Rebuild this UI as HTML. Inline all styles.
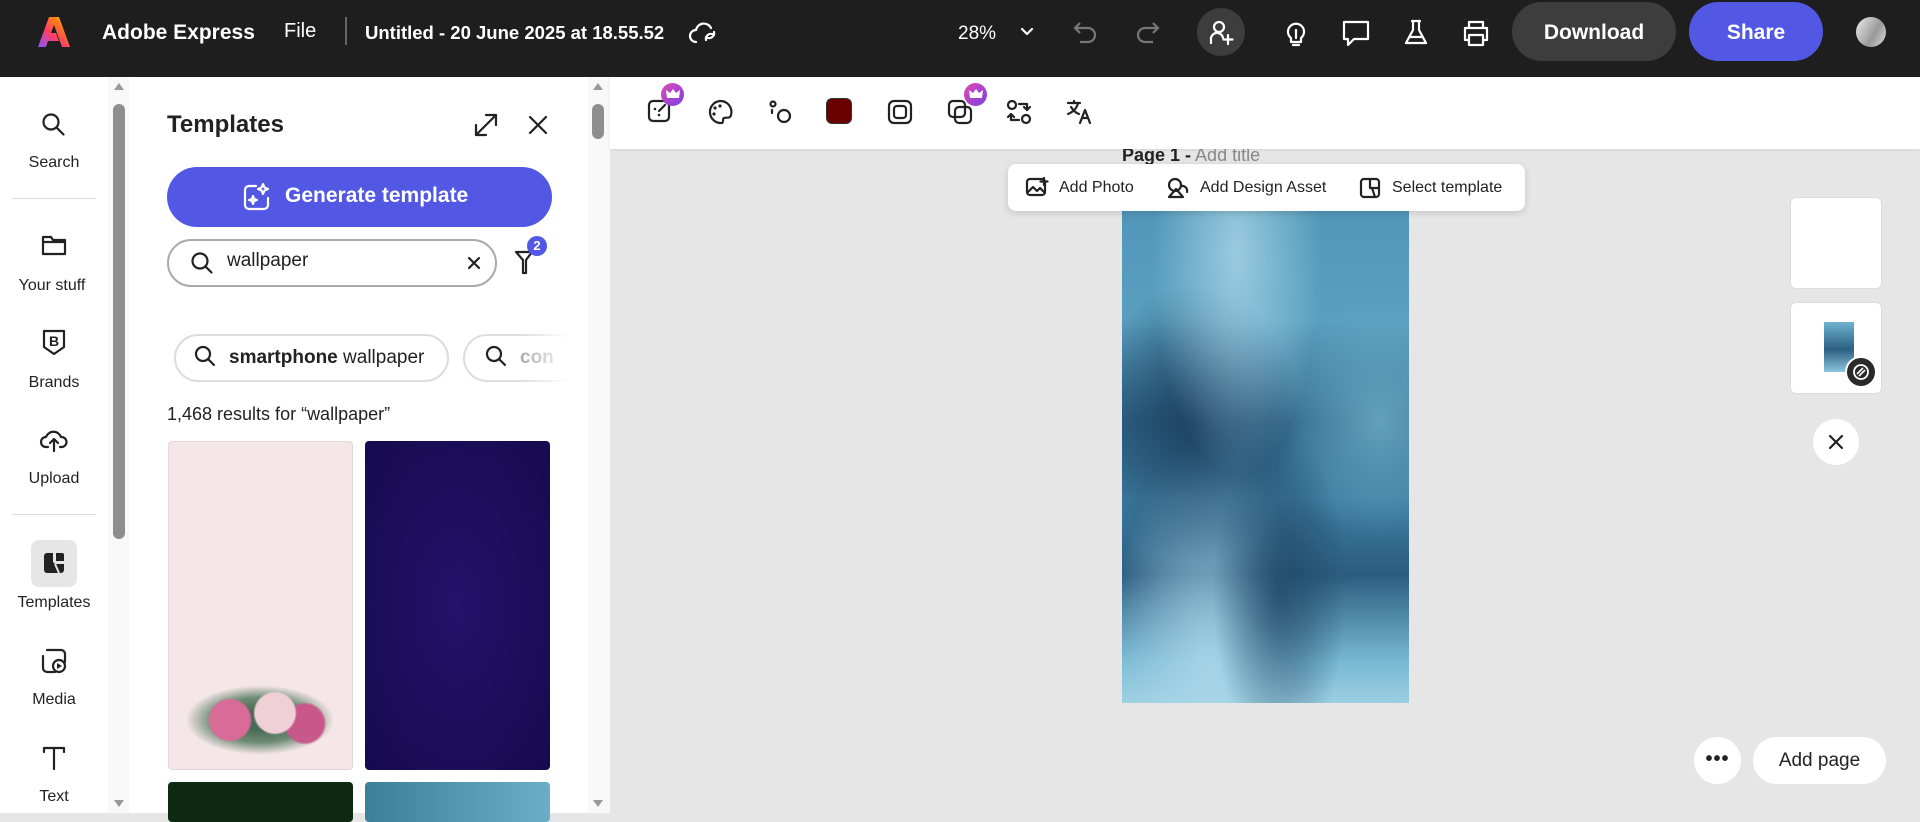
<!DOCTYPE html>
<html><head><meta charset="utf-8"><style>
*{margin:0;padding:0;box-sizing:border-box}
body{width:1920px;height:813px;overflow:hidden;font-family:"Liberation Sans",sans-serif;background:#e6e6e6;position:relative;color:#222}
.a{position:absolute}
.top{left:0;top:0;width:1920px;height:77px;background:#1e1e1e;color:#fff}
.t{position:absolute;white-space:nowrap}
svg{position:absolute;overflow:visible}
.rail{left:0;top:77px;width:108px;height:736px;background:#fff}
.lbl{position:absolute;width:108px;text-align:center;font-size:16px;color:#222}
.ic{fill:none;stroke:#222;stroke-width:2.2;stroke-linecap:round;stroke-linejoin:round}
.wic{fill:none;stroke:#fff;stroke-width:2.2;stroke-linecap:round;stroke-linejoin:round}
</style></head><body>
<div class="a top">
 <svg style="left:37px;top:15px" width="34" height="34" viewBox="0 0 34 34"><defs><linearGradient id="lg" x1="0" y1="1" x2="1" y2="0"><stop offset="0" stop-color="#7b5cff"/><stop offset=".4" stop-color="#ff3c6e"/><stop offset=".7" stop-color="#ff7a1a"/><stop offset="1" stop-color="#ffcc00"/></linearGradient></defs><path d="M12 2h10l11 30h-8l-8-22-3 8h5l3 8h-11l-2 6h-8z" fill="url(#lg)"/></svg>
 <div class="t" style="left:102px;top:21px;font-size:21px;font-weight:bold">Adobe Express</div>
 <div class="t" style="left:284px;top:20px;font-size:20px">File</div>
 <div class="a" style="left:345px;top:17px;width:2px;height:28px;background:#666"></div>
 <div class="t" style="left:365px;top:22px;font-size:18.5px;font-weight:bold">Untitled - 20 June 2025 at 18.55.52</div>
 <svg style="left:688px;top:18px" width="32" height="28" viewBox="0 0 32 28"><path class="wic" d="M8 24a6 6 0 0 1 0-12 8 8 0 0 1 15-2M26 14a5 5 0 0 1-8 5M18 22a5 5 0 0 1 8-5"/></svg>
 <div class="t" style="left:958px;top:23px;font-size:19px">28%</div>
 <svg style="left:1020px;top:27px" width="14" height="10"><path class="wic" d="M2 2l5 5 5-5"/></svg>
 <svg style="left:1072px;top:19px" width="28" height="28"><path d="M8 4l-5 5 5 5M3 9h13a7 7 0 0 1 0 14h-8" fill="none" stroke="#777" stroke-width="2.2"/></svg>
 <svg style="left:1133px;top:19px" width="28" height="28"><path d="M20 4l5 5-5 5M25 9h-13a7 7 0 0 0 0 14h8" fill="none" stroke="#777" stroke-width="2.2"/></svg>
 <div class="a" style="left:1197px;top:8px;width:48px;height:48px;border-radius:50%;background:#3d3d3d"></div>
 <svg style="left:1208px;top:19px" width="28" height="28"><circle class="wic" cx="11" cy="8" r="5"/><path class="wic" d="M3 24v-3a6 6 0 0 1 12-2M20 16v9M15.5 20.5h9"/></svg>
 <svg style="left:1282px;top:18px" width="28" height="30"><path class="wic" d="M9 20a8 8 0 1 1 10 0v4h-10zM11 27h6M14 12v8"/></svg>
 <svg style="left:1341px;top:19px" width="30" height="28"><path class="wic" d="M3 3h24v17h-14l-6 6v-6h-4z"/></svg>
 <svg style="left:1403px;top:18px" width="26" height="30"><path class="wic" d="M9 3h8M10 3v9l-7 13h20l-7-13v-9M6 19h14"/></svg>
 <svg style="left:1461px;top:19px" width="30" height="30"><path class="wic" d="M8 9v-6h14v6M4 9h22v12h-4M8 21h-4v-12M8 16h14v10h-14z"/></svg>
 <div class="a" style="left:1512px;top:2px;width:164px;height:59px;border-radius:30px;background:#3d3d3d"></div>
 <div class="t" style="left:1512px;top:21px;width:164px;text-align:center;font-size:21px;font-weight:bold">Download</div>
 <div class="a" style="left:1689px;top:2px;width:134px;height:59px;border-radius:30px;background:#5258e4"></div>
 <div class="t" style="left:1689px;top:21px;width:134px;text-align:center;font-size:21px;font-weight:bold">Share</div>
 <div class="a" style="left:1856px;top:17px;width:30px;height:30px;border-radius:50%;background:linear-gradient(120deg,#eee,#999 60%,#ddd)"></div>
</div>

<div class="a rail">
 <svg style="left:41px;top:35px" width="26" height="26"><circle class="ic" cx="10" cy="10" r="7.5"/><path class="ic" d="M15.5 15.5l7 7"/></svg>
 <div class="lbl" style="top:77px">Search</div>
 <div class="a" style="left:12px;top:121px;width:84px;height:1px;background:#ddd"></div>
 <svg style="left:41px;top:156px" width="26" height="24"><path class="ic" d="M2 4h8l2 3h12v14h-22zM2 9h22"/></svg>
 <div class="lbl" style="top:200px;left:-2px">Your stuff</div>
 <svg style="left:42px;top:252px" width="24" height="28"><path class="ic" d="M2 2h20v16l-10 7-10-7z"/><text x="7" y="17" font-size="14" font-weight="bold" font-family="Liberation Sans" fill="#222">B</text></svg>
 <div class="lbl" style="top:297px">Brands</div>
 <svg style="left:40px;top:350px" width="28" height="26"><path class="ic" d="M8 20h-2a5 5 0 0 1 0-10 8 8 0 0 1 15 0 5 5 0 0 1 1 10h-2M14 12v12M10 16l4-4 4 4"/></svg>
 <div class="lbl" style="top:393px">Upload</div>
 <div class="a" style="left:12px;top:437px;width:84px;height:1px;background:#ddd"></div>
 <div class="a" style="left:31px;top:463px;width:46px;height:47px;border-radius:8px;background:#e6e6e6"></div>
 <svg style="left:41px;top:473px" width="26" height="26"><path d="M3 6a3 3 0 0 1 3-3h6v8a3 3 0 0 0 3 3h8v6a3 3 0 0 1-3 3h-14a3 3 0 0 1-3-3z" fill="#222"/><path d="M15 3h6a2 2 0 0 1 2 2v6h-8z" fill="#222"/><path d="M14 14l4 9" stroke="#e6e6e6" stroke-width="2"/></svg>
 <div class="lbl" style="top:517px">Templates</div>
 <svg style="left:40px;top:570px" width="28" height="28"><path class="ic" d="M7 3h14a4 4 0 0 1 4 4v8M3 9v12a4 4 0 0 0 4 4h8"/><circle class="ic" cx="19" cy="19" r="6"/><path d="M17 16v6l5-3z" fill="#222"/></svg>
 <div class="lbl" style="top:614px">Media</div>
 <svg style="left:42px;top:668px" width="24" height="26"><path class="ic" d="M2 3h20M12 3v21M2 3v4M22 3v4"/></svg>
 <div class="lbl" style="top:711px">Text</div>
</div>
<div class="a" style="left:108px;top:77px;width:21px;height:736px;background:#f8f8f8"></div>
<div class="a" style="left:113px;top:104px;width:12px;height:435px;border-radius:6px;background:#8e8e8e"></div>
<div class="a" style="left:114px;top:83px;border:5px solid transparent;border-bottom:7px solid #999;border-top:0"></div>
<div class="a" style="left:114px;top:800px;border:5px solid transparent;border-top:7px solid #999;border-bottom:0"></div>

<div class="a" style="left:129px;top:77px;width:481px;height:736px;background:#fff"></div>
<div class="t" style="left:167px;top:111px;font-size:24px;font-weight:bold">Templates</div>
<svg style="left:472px;top:111px" width="28" height="28"><path class="ic" d="M4 24l20-20M14 4h10v10M4 14v10h10"/></svg>
<svg style="left:528px;top:115px" width="20" height="20"><path class="ic" d="M2 2l16 16M18 2l-16 16"/></svg>
<div class="a" style="left:167px;top:167px;width:385px;height:60px;border-radius:30px;background:#5258e4"></div>
<svg style="left:242px;top:182px" width="30" height="30"><path class="wic" d="M14 4h-7a4 4 0 0 0-4 4v15a4 4 0 0 0 4 4h15a4 4 0 0 0 4-4v-7M21 2l1.5 3.5 3.5 1.5-3.5 1.5-1.5 3.5-1.5-3.5-3.5-1.5 3.5-1.5zM11 14l1 3 3 1-3 1-1 3-1-3-3-1 3-1z"/></svg>
<div class="t" style="left:285px;top:184px;font-size:21px;font-weight:bold;color:#fff">Generate template</div>
<div class="a" style="left:167px;top:239px;width:330px;height:48px;border-radius:24px;border:2.5px solid #aaa"></div>
<svg style="left:190px;top:251px" width="26" height="26"><circle class="ic" cx="10" cy="10" r="7.5"/><path class="ic" d="M15.5 15.5l6 6"/></svg>
<div class="t" style="left:227px;top:250px;font-size:19px">wallpaper</div>
<svg style="left:467px;top:256px" width="14" height="14"><path class="ic" d="M2 2l10 10M12 2l-10 10"/></svg>
<svg style="left:514px;top:249px" width="26" height="28"><path class="ic" d="M2 3h16l-6 8v13h-3v-13z"/></svg>
<div class="a" style="left:527px;top:236px;width:20px;height:20px;border-radius:50%;background:#5258e4;color:#fff;font-size:13px;font-weight:bold;text-align:center;line-height:20px">2</div>
<div class="a" style="left:174px;top:334px;width:275px;height:48px;border-radius:24px;border:2px solid #ddd"></div>
<svg style="left:194px;top:345px" width="24" height="24"><circle class="ic" cx="9" cy="9" r="7"/><path class="ic" d="M14 14l6 6"/></svg>
<div class="t" style="left:229px;top:347px;font-size:19px"><b>smartphone</b> wallpaper</div>
<div class="a" style="left:463px;top:334px;width:120px;height:48px;border-radius:24px;border:2px solid #ddd;border-right:none"></div>
<svg style="left:485px;top:345px" width="24" height="24"><circle class="ic" cx="9" cy="9" r="7"/><path class="ic" d="M14 14l6 6"/></svg>
<div class="t" style="left:520px;top:347px;font-size:19px;color:#aaa;font-weight:bold">con</div>
<div class="a" style="left:520px;top:330px;width:70px;height:56px;background:linear-gradient(90deg,rgba(255,255,255,0),#fff 70%)"></div>
<div class="t" style="left:167px;top:404px;font-size:18px">1,468 results for “wallpaper”</div>
<div class="a" style="left:168px;top:441px;width:185px;height:329px;border-radius:4px;background:#f5e6e8;border:1px solid #e5d5d8"></div>
<div class="a" style="left:185px;top:685px;width:150px;height:70px;border-radius:50%;background:radial-gradient(circle at 30% 50%,#d86b98 0 18%,transparent 20%),radial-gradient(circle at 60% 40%,#efd0d6 0 20%,transparent 22%),radial-gradient(circle at 80% 55%,#c8588a 0 15%,transparent 17%),radial-gradient(ellipse,#4a6b55 20%,#6d8b74 45%,transparent 70%)"></div>
<div class="a" style="left:365px;top:441px;width:185px;height:329px;border-radius:4px;background:radial-gradient(ellipse at 50% 50%,#24126b,#170a4e)"></div>
<div class="a" style="left:168px;top:782px;width:185px;height:40px;border-radius:4px;background:#0f2a12"></div>
<div class="a" style="left:365px;top:782px;width:185px;height:40px;border-radius:4px;background:linear-gradient(90deg,#3c7f99,#6aaec8)"></div>
<div class="a" style="left:588px;top:77px;width:22px;height:736px;background:#f8f8f8"></div>
<div class="a" style="left:592px;top:104px;width:12px;height:35px;border-radius:6px;background:#8e8e8e"></div>
<div class="a" style="left:593px;top:83px;border:5px solid transparent;border-bottom:7px solid #999;border-top:0"></div>
<div class="a" style="left:593px;top:800px;border:5px solid transparent;border-top:7px solid #999;border-bottom:0"></div>

<div class="a" style="left:610px;top:77px;width:1310px;height:72px;background:#fff;box-shadow:0 1px 3px rgba(0,0,0,.08)"></div>
<svg style="left:647px;top:99px" width="24" height="24"><rect class="ic" x="2" y="2" width="20" height="20" rx="4"/><circle cx="8" cy="10" r="1.3" fill="#222"/><circle cx="12" cy="16" r="1.3" fill="#222"/><path class="ic" d="M12 12l6-6"/></svg>
<svg style="left:707px;top:99px" width="26" height="26"><path class="ic" d="M13 2a11 11 0 1 0 2 22c2-1 0-4 2-5s6 1 7-3a11 11 0 0 0-11-14z"/><circle cx="8" cy="9" r="1.6" fill="#222"/><circle cx="13" cy="7" r="1.6" fill="#222"/><circle cx="7" cy="15" r="1.6" fill="#222"/></svg>
<svg style="left:767px;top:99px" width="26" height="26"><circle class="ic" cx="17" cy="17" r="6"/><circle class="ic" cx="6" cy="5" r="2.5"/><path class="ic" d="M5 11v3"/></svg>
<div class="a" style="left:826px;top:98px;width:26px;height:26px;border-radius:6px;background:#6b0000;border:1px solid #333"></div>
<svg style="left:887px;top:99px" width="26" height="26"><rect class="ic" x="2" y="2" width="22" height="22" rx="5"/><rect class="ic" x="7" y="7" width="12" height="12" rx="3"/></svg>
<svg style="left:947px;top:99px" width="26" height="26"><rect class="ic" x="2" y="2" width="16" height="16" rx="4"/><rect class="ic" x="8" y="8" width="16" height="16" rx="4" fill="#fff"/></svg>
<svg style="left:1006px;top:99px" width="26" height="26"><circle class="ic" cx="6" cy="6" r="4"/><circle class="ic" cx="20" cy="20" r="4"/><path class="ic" d="M13 5h8v6M18 8l3 3 3-3M13 21h-8v-6M8 18l-3-3-3 3"/></svg>
<svg style="left:1066px;top:99px" width="26" height="26"><path class="ic" d="M2 4h12M8 2v2M12 4c-1 5-5 9-10 11M5 8c2 3 5 6 8 7M14 24l5-13 5 13M16 19h6"/></svg>
<div class="a" style="left:661px;top:83px;width:23px;height:23px;border-radius:50%;background:linear-gradient(135deg,#e04bb0,#7b3fe4)"></div>
<svg style="left:666px;top:89px" width="14" height="11"><path d="M1 9l-1-8 4 3 3-4 3 4 4-3-1 8z" fill="#fff"/></svg>
<div class="a" style="left:964px;top:83px;width:23px;height:23px;border-radius:50%;background:linear-gradient(135deg,#e04bb0,#7b3fe4)"></div>
<svg style="left:969px;top:89px" width="14" height="11"><path d="M1 9l-1-8 4 3 3-4 3 4 4-3-1 8z" fill="#fff"/></svg>

<div class="a" style="left:1122px;top:149px;width:287px;height:22px;overflow:hidden"><div class="t" style="top:-4px;font-size:18px"><b>Page 1 -</b> <span style="color:#888">Add title</span></div></div>
<div class="a" style="left:1122px;top:192px;width:287px;height:511px;background:
radial-gradient(ellipse at 40% 12%,rgba(170,215,232,.8),transparent 35%),
radial-gradient(ellipse at 25% 45%,rgba(25,60,90,.85),transparent 35%),
radial-gradient(ellipse at 55% 78%,rgba(30,70,100,.8),transparent 30%),
radial-gradient(ellipse at 90% 45%,rgba(120,185,210,.7),transparent 30%),
radial-gradient(ellipse at 30% 95%,rgba(170,215,232,.9),transparent 35%),
linear-gradient(180deg,#4f95b8,#5a9fc0 25%,#2f6488 45%,#3d7ba0 60%,#2b5d80 75%,#79b9d3 92%,#9ccfe2)"></div>
<div class="a" style="left:1008px;top:164px;width:517px;height:47px;border-radius:8px;background:#fff;box-shadow:0 2px 8px rgba(0,0,0,.15)"></div>
<svg style="left:1025px;top:176px" width="24" height="24"><rect class="ic" x="2" y="3" width="18" height="16" rx="3"/><path class="ic" d="M3 16l5-5 4 4 3-3 5 5M19 2v7M15.5 5.5h7"/></svg>
<div class="t" style="left:1059px;top:179px;font-size:16px">Add Photo</div>
<svg style="left:1166px;top:176px" width="24" height="24"><circle class="ic" cx="9" cy="9" r="6"/><path class="ic" d="M3 21l7-8 7 8zM15 10a5 5 0 0 1 6 6"/></svg>
<div class="t" style="left:1200px;top:179px;font-size:16px">Add Design Asset</div>
<svg style="left:1358px;top:176px" width="24" height="24"><path class="ic" d="M6 3h12a3 3 0 0 1 3 3v12a3 3 0 0 1-3 3h-12a3 3 0 0 1-3-3v-12a3 3 0 0 1 3-3zM12 3v9h9M14 12l3 9"/></svg>
<div class="t" style="left:1392px;top:179px;font-size:16px">Select template</div>

<div class="a" style="left:1790px;top:197px;width:92px;height:92px;border-radius:6px;background:#fff;border:1px solid #ddd"></div>
<div class="a" style="left:1790px;top:302px;width:92px;height:92px;border-radius:6px;background:#fff;border:1px solid #ddd"></div>
<div class="a" style="left:1824px;top:322px;width:30px;height:50px;background:linear-gradient(180deg,#6fb3d0,#2c5f82 55%,#8cc6dc)"></div>
<div class="a" style="left:1845px;top:356px;width:32px;height:32px;border-radius:50%;background:#2a2a2a;border:2px solid #fff"></div>
<svg style="left:1852px;top:363px" width="18" height="18"><circle cx="9" cy="9" r="7" fill="none" stroke="#fff" stroke-width="1.8"/><path d="M5 11l6-6M7 13l6-6" stroke="#fff" stroke-width="1.6"/></svg>
<div class="a" style="left:1813px;top:419px;width:46px;height:46px;border-radius:50%;background:#fff"></div>
<svg style="left:1828px;top:434px" width="16" height="16"><path class="ic" d="M2 2l12 12M14 2l-12 12"/></svg>
<div class="a" style="left:1694px;top:737px;width:47px;height:47px;border-radius:50%;background:#fff"></div>
<div class="t" style="left:1694px;top:748px;width:47px;text-align:center;font-size:20px;font-weight:bold;letter-spacing:1px">•••</div>
<div class="a" style="left:1753px;top:737px;width:133px;height:47px;border-radius:24px;background:#fff"></div>
<div class="t" style="left:1753px;top:750px;width:133px;text-align:center;font-size:19px">Add page</div>
</body></html>
